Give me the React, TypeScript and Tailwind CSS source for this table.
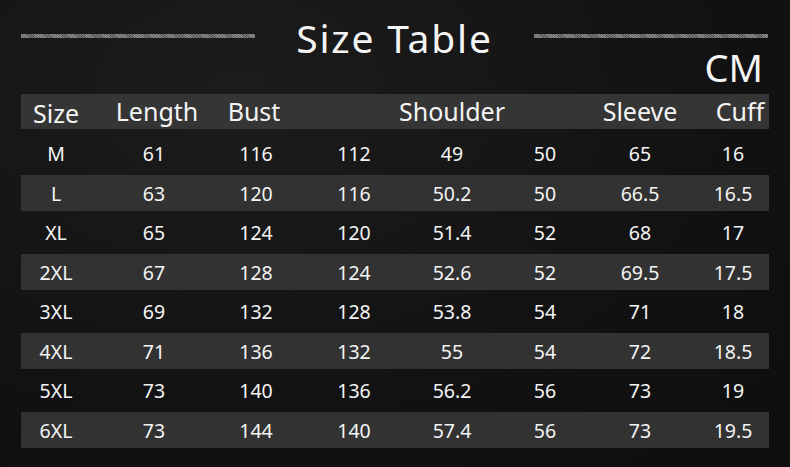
const headers = ['Size', 'Length', 'Bust', '', 'Shoulder', '', 'Sleeve', 'Cuff'];

const rows = [
  ['M', '61', '116', '112', '49', '50', '65', '16'],
  ['L', '63', '120', '116', '50.2', '50', '66.5', '16.5'],
  ['XL', '65', '124', '120', '51.4', '52', '68', '17'],
  ['2XL', '67', '128', '124', '52.6', '52', '69.5', '17.5'],
  ['3XL', '69', '132', '128', '53.8', '54', '71', '18'],
  ['4XL', '71', '136', '132', '55', '54', '72', '18.5'],
  ['5XL', '73', '140', '136', '56.2', '56', '73', '19'],
  ['6XL', '73', '144', '140', '57.4', '56', '73', '19.5'],
];

// column widths chosen so each centre lands on the reference's value column
const cols = 'grid grid-cols-[70px_126px_78px_118px_78px_108px_82px_89px] items-center';

// small nudges for the header labels, which sit a little off the numbers
const headerPad = ['', 'pl-[6px]', 'pr-[4px]', '', '', '', '', 'pl-[29px]'];

function Rule() {
  return (
    <div className="h-[4px] w-[234px] mt-[16px] bg-[repeating-linear-gradient(45deg,#8c8c8c_0_1px,#565656_1px_2px)]" />
  );
}

export default function App() {
  return (
    <div
      className="w-[790px] h-[467px] overflow-hidden bg-[#131313] text-[#f4f4f4] bg-[radial-gradient(ellipse_at_30%_20%,#1c1c1c_0%,#121212_60%,#0e0e0e_100%)]"
      style={{ fontFamily: '"Noto Sans", "Open Sans", sans-serif' }}
    >
      {/* title */}
      <div className="flex items-start pt-[18px] pl-[21px] pr-[22px] h-[57px]">
        <Rule />
        <div className="flex-1 text-center text-[39px] leading-none tracking-[1.8px]">Size Table</div>
        <Rule />
      </div>

      <div className="flex justify-end pr-[27px] mt-[-9px] text-[38px] leading-none">CM</div>

      {/* table */}
      <div className="mt-[8px] px-[21px]">
        <div className={`${cols} h-[35px] bg-[#353535] text-[25px] leading-none`}>
          {headers.map((h, i) => (
            <div
              key={i}
              className={`flex justify-center whitespace-nowrap ${headerPad[i]} ${i === 0 ? 'pt-[4px]' : ''}`}
            >
              {h}
            </div>
          ))}
        </div>

        <div className="mt-[5px]">
          {rows.map((r, ri) => (
            <div key={ri} className="h-[39.5px] flex items-center">
              <div className={`${cols} w-full h-[36px] text-[19.5px] leading-none ${ri % 2 === 1 ? 'bg-[#323232]' : ''}`}>
                {r.map((v, i) => (
                  <div key={i} className={`flex justify-center whitespace-nowrap ${i === 7 ? 'pl-[15px]' : ''}`}>
                    {v}
                  </div>
                ))}
              </div>
            </div>
          ))}
        </div>
      </div>
    </div>
  );
}
